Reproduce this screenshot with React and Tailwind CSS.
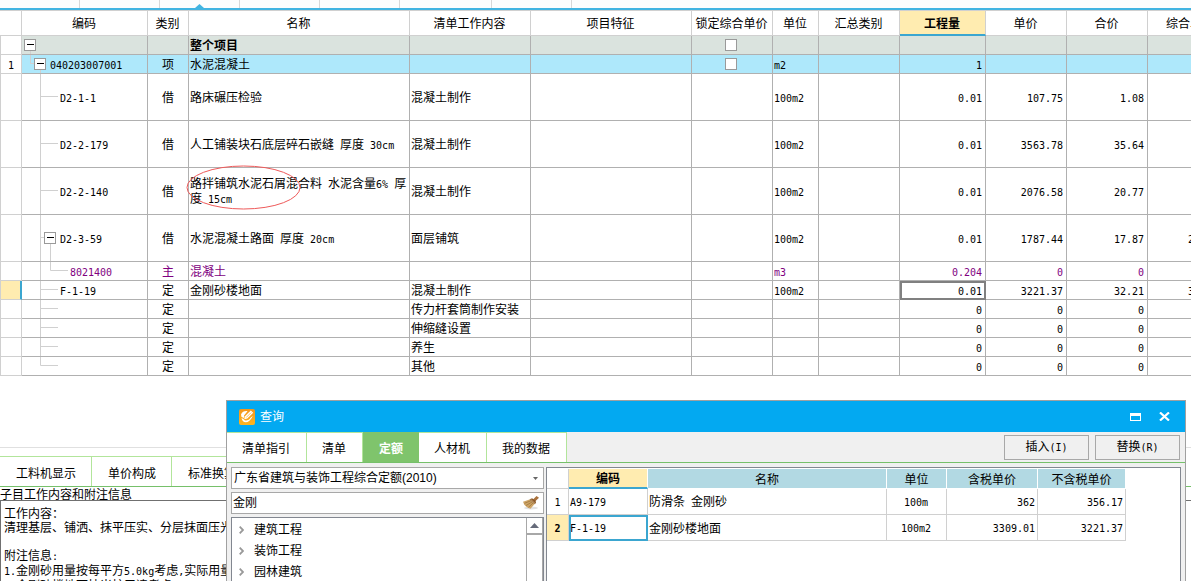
import React from "react";

const LATIN = /([\x20-\x7e]+)/;

function T({ children }) {
  return String(children)
    .split(LATIN)
    .map((part, i) =>
      i % 2 ? (
        <span key={i} className="whitespace-pre-wrap text-[10px]">{part}</span>
      ) : (
        part
      )
    );
}

const COLUMNS = ["编码", "类别", "名称", "清单工作内容", "项目特征", "锁定综合单价", "单位", "汇总类别", "工程量", "单价", "合价", "综合单价"];

const ROWS = [
  { code: "", kind: "", name: "整个项目", tone: "total", lock: true, tree: "root" },
  { n: "1", code: "040203007001", kind: "项", name: "水泥混凝土", tone: "item", unit: "m2", qty: "1", lock: true, tree: "item" },
  { code: "D2-1-1", kind: "借", name: "路床碾压检验", work: "混凝土制作", unit: "100m2", qty: "0.01", price: "107.75", sum: "1.08", tall: true, tree: "leaf" },
  { code: "D2-2-179", kind: "借", name: "人工铺装块石底层碎石嵌缝 厚度 30cm", work: "混凝土制作", unit: "100m2", qty: "0.01", price: "3563.78", sum: "35.64", tall: true, tree: "leaf" },
  { code: "D2-2-140", kind: "借", name: "路拌铺筑水泥石屑混合料 水泥含量6% 厚度 15cm", work: "混凝土制作", unit: "100m2", qty: "0.01", price: "2076.58", sum: "20.77", tall: true, tree: "leaf", marked: true },
  { code: "D2-3-59", kind: "借", name: "水泥混凝土路面 厚度 20cm", work: "面层铺筑", unit: "100m2", qty: "0.01", price: "1787.44", sum: "17.87", more: "2", tall: true, tree: "open" },
  { code: "8021400", kind: "主", name: "混凝土", unit: "m3", qty: "0.204", price: "0", sum: "0", tone: "main", tree: "child" },
  { code: "F-1-19", kind: "定", name: "金刚砂楼地面", work: "混凝土制作", unit: "100m2", qty: "0.01", price: "3221.37", sum: "32.21", more: "3", tree: "leaf", current: true },
  { kind: "定", work: "传力杆套筒制作安装", qty: "0", price: "0", sum: "0", tree: "leaf" },
  { kind: "定", work: "伸缩缝设置", qty: "0", price: "0", sum: "0", tree: "leaf" },
  { kind: "定", work: "养生", qty: "0", price: "0", sum: "0", tree: "leaf" },
  { kind: "定", work: "其他", qty: "0", price: "0", sum: "0", tree: "last" },
];

const GUTTER = { root: "w-4", item: "w-7", leaf: "w-[38px]", open: "w-[38px]", child: "w-12", last: "w-[38px]" };
const TOGGLE = { root: "left-[2px] top-[3px]", item: "left-3 top-[3px]", open: "left-[22px] top-[17px]" };

function TreeGutter({ kind, tall }) {
  const h = tall ? 46 : 18;
  const y = h / 2 - 0.5;
  const lines = {
    root: `M8.5 ${y}V${h}`,
    item: `M8.5 0V${y}H14M18.5 ${y}V${h}`,
    leaf: `M18.5 0V${h}M18.5 ${y}H36`,
    open: `M18.5 0V${h}M18.5 ${y}H24M28.5 ${y}V${h}`,
    child: `M18.5 0V${h}M28.5 0V${y}H46`,
    last: `M18.5 0V${y}H36`,
  };
  return (
    <span className={`relative block h-full shrink-0 ${GUTTER[kind]}`}>
      <svg width="48" height={h} className="block" fill="none" stroke="#d0d0d0">
        <path d={lines[kind]} />
      </svg>
      {TOGGLE[kind] && (
        <button type="button" aria-label="折叠" className={`absolute flex size-3 items-start justify-center border border-[#9a9a9a] bg-white pt-1 ${TOGGLE[kind]}`}>
          <span className="h-px w-[7px] bg-black" />
        </button>
      )}
    </span>
  );
}

const TONES = { total: "bg-[#dae3de] font-bold", item: "bg-[#aee8fb]", main: "text-[#800080]" };

function BudgetRow({ row }) {
  const line = "border-r border-b border-[#b0b0b0] pb-0";
  const cell = `${line} pt-[2px] pr-[2px] pl-px`;
  const num = `${line} pt-[2px] pr-[3px] pl-px text-right`;
  return (
    <tr className={`${row.tall ? "h-[47px]" : "h-[19px]"} ${TONES[row.tone] || ""}`}>
      <th
        scope="row"
        className={`border-b border-l border-[#d0d0d0] px-0 pt-[2px] pb-0 text-center font-normal ${
          row.current ? "border-r-2 border-r-[#3ba6d0] bg-[#ffecb0]" : "border-r bg-white"
        }`}
      >
        {row.n && <T>{row.n}</T>}
      </th>
      <td className="border-r border-b border-[#b0b0b0] p-0">
        <div className={`flex items-center overflow-hidden ${row.tall ? "h-[46px]" : "h-[18px]"}`}>
          <TreeGutter kind={row.tree} tall={row.tall} />
          <span className="pt-[2px]">{row.code && <T>{row.code}</T>}</span>
        </div>
      </td>
      <td className={`${line} px-0 pt-[2px] text-center`}>{row.kind}</td>
      <td className={`${cell} relative`}>
        <T>{row.name || ""}</T>
        {row.marked && (
          <svg className="absolute -top-1 -left-1 z-10" width="118" height="48" fill="none" stroke="#ee5a5a">
            <ellipse cx="58.500" cy="23.500" rx="56.500" ry="21.500" />
          </svg>
        )}
      </td>
      <td className={cell}>{row.work}</td>
      <td className={cell} />
      <td className={`${line} pt-0 pr-[2px] pl-0`}>
        {row.lock && (
          <input type="checkbox" aria-label={`锁定综合单价 ${row.name}`} className="mx-auto block size-3 appearance-none border border-[#9a9a9a] bg-white" />
        )}
      </td>
      <td className={cell}><T>{row.unit || ""}</T></td>
      <td className={cell} />
      <td className={`${num} ${row.current ? "outline-2 -outline-offset-2 outline-[#808080]" : ""}`}><T>{row.qty || ""}</T></td>
      <td className={num}><T>{row.price || ""}</T></td>
      <td className={num}><T>{row.sum || ""}</T></td>
      <td className={`${line} pt-[2px] pl-10`}><T>{row.more || ""}</T></td>
    </tr>
  );
}

function BudgetTable() {
  return (
    <div className="overflow-hidden">
      <table className="w-[1234px] table-fixed border-separate border-spacing-0">
        <colgroup>
          <col className="w-[22px]" />
          <col className="w-[126px]" />
          <col className="w-[41px]" />
          <col className="w-[221px]" />
          <col className="w-[121px]" />
          <col className="w-[161px]" />
          <col className="w-[81px]" />
          <col className="w-[46px]" />
          <col className="w-[81px]" />
          <col className="w-[86px]" />
          <col className="w-[81px]" />
          <col className="w-[81px]" />
          <col className="w-[86px]" />
        </colgroup>
        <thead>
          <tr className="h-[26px]">
            <td className="border-t border-r border-b border-[#d0d0d0] p-0" />
            {COLUMNS.map((c) => (
              <th
                key={c}
                scope="col"
                className={`border-t border-r border-[#d0d0d0] pt-[2px] pr-px pb-0 pl-0 ${
                  c === "工程量" ? "border-b-2 border-b-[#3ba6d0] bg-[#ffecb0] font-bold" : "border-b font-normal"
                }`}
              >
                {c}
              </th>
            ))}
          </tr>
        </thead>
        <tbody>
          {ROWS.map((row, i) => (
            <BudgetRow key={i} row={row} />
          ))}
        </tbody>
      </table>
    </div>
  );
}

function TopStrip() {
  return (
    <div className="relative flex h-[10px] border-b-2 border-[#42b4e1] bg-[#fdfdfd]">
      {[1, 2, 3, 4, 5].map((i) => (
        <div key={i} className="w-20 border-r border-[#d8d8d8]" />
      ))}
      <div className="w-[92px] border-r border-[#d8d8d8]" />
      <div className="w-20 border-r border-[#d8d8d8]" />
      <svg className="absolute bottom-0 left-[195px]" width="9" height="4" fill="#42b4e1">
        <path d="M0 4 4.500 0 9 4z" />
      </svg>
    </div>
  );
}

function DetailPane() {
  return (
    <section className="absolute inset-x-0 top-[447px] bottom-0 flex flex-col border-t border-[#e0e0e0] pt-2">
      <div className="flex h-[31px] border-b border-[#76c06a]">
        {["工料机显示", "单价构成", "标准换算"].map((t) => (
          <button key={t} type="button" className="border-t border-r border-[#b2e59b] pt-1 pr-[15px] pl-4">
            {t}
          </button>
        ))}
      </div>
      <h2 className="h-[13px] leading-[16px]">子目工作内容和附注信息</h2>
      <div className="flex-1 overflow-hidden border-t border-l border-[#707070] px-[3px] pt-[6px] whitespace-nowrap">
        <p>工作内容：</p>
        <p>清理基层、铺洒、抹平压实、分层抹面压光</p>
        <p className="mt-[14px]"><T>附注信息:</T></p>
        <p><T>1.金刚砂用量按每平方5.0kg考虑,实际用量</T></p>
        <p><T>2.金刚砂楼地面技米护三遍考虑</T></p>
      </div>
    </section>
  );
}

function AppIcon() {
  return (
    <svg width="16" height="16" viewBox="0 0 16 16" aria-hidden="true">
      <defs>
        <linearGradient id="badge" x1="0" y1="0" x2="0" y2="1">
          <stop offset="0" stopColor="#f3961c" />
          <stop offset="1" stopColor="#ffb51f" />
        </linearGradient>
      </defs>
      <rect width="16" height="16" rx="2" fill="url(#badge)" />
      <path d="M2 5.500C3 3 5.500 1.800 8.500 2.200L5 6.500 5.200 9 2.500 8z" fill="#fff" />
      <path d="M11.800 1.500 14.200 3.700 8.300 9.600 5.200 10.200 6 7.200z" fill="#fff" />
      <path d="M2.500 9C3.500 14.800 10 15.500 13.800 7L12 8.300C9.500 12 6 12.500 4.500 10z" fill="#fff" />
      <path d="m7.200 8.500 5-5" stroke="#f8a51d" strokeWidth=".7" />
    </svg>
  );
}

function Broom() {
  return (
    <svg width="18" height="16" viewBox="0 0 18 16" aria-hidden="true">
      <ellipse cx="9" cy="13" rx="7" ry="1.500" fill="#e2e2e2" />
      <path d="M14.500 1 17 2.800 13 6.500 11 4.500z" fill="#a9713c" />
      <path d="M7.500 4.500 1 6.800 2.200 9.500 3.500 11 5.500 12.500 8.500 13.800 12.500 9z" fill="#cfa566" />
      <path d="M7.500 4.500 12.500 9.300 14 8 13.500 5.500 10 3.200z" fill="#8c5a2c" />
      <path d="m2.500 8.300 6.500-2.600M4 10.500l6-3.500M6.500 12.300l4.500-4.300" stroke="#96703a" strokeWidth=".7" />
      <path d="m8.500 4.200 4.700 4.500" stroke="#e6c48c" strokeWidth=".7" />
    </svg>
  );
}

function QueryTable() {
  const head = "border-r border-b border-white bg-[#b2d9e3] px-0 pt-[2px] pb-0 font-normal";
  const line = "border-r border-b border-[#d0d0d0] pb-0 pt-[2px]";
  const cell = `${line} pr-[2px] pl-px`;
  const rows = [
    ["1", "A9-179", "防滑条 金刚砂", "100m", "362", "356.17"],
    ["2", "F-1-19", "金刚砂楼地面", "100m2", "3309.01", "3221.37"],
  ];
  return (
    <table className="w-[579px] table-fixed border-separate border-spacing-0">
      <colgroup>
        <col className="w-[22px]" />
        <col className="w-[79px]" />
        <col className="w-[239px]" />
        <col className="w-[60px]" />
        <col className="w-[91px]" />
        <col className="w-[88px]" />
      </colgroup>
      <thead>
        <tr className="h-5">
          <td className="border-r border-b border-[#d0d0d0] p-0" />
          <th scope="col" className="border-r border-b-2 border-r-white border-b-[#3ba6d0] bg-[#ffecb0] px-0 pt-[2px] pb-0 font-bold">编码</th>
          <th scope="col" className={head}>名称</th>
          <th scope="col" className={head}>单位</th>
          <th scope="col" className={head}>含税单价</th>
          <th scope="col" className={head}>不含税单价</th>
        </tr>
      </thead>
      <tbody>
        {rows.map(([n, code, name, unit, taxed, net]) => {
          const on = n === "2";
          return (
            <tr key={n} className="h-[26px]">
              <th scope="row" className={`${line} px-0 ${on ? "bg-[#ffecb0] font-bold" : "font-normal"}`}><T>{n}</T></th>
              <td className={`${cell} ${on ? "outline-2 -outline-offset-2 outline-[#3ba6d0]" : ""}`}><T>{code}</T></td>
              <td className={cell}><T>{name}</T></td>
              <td className={`${cell} text-center`}><T>{unit}</T></td>
              <td className={`${cell} text-right`}><T>{taxed}</T></td>
              <td className={`${cell} text-right`}><T>{net}</T></td>
            </tr>
          );
        })}
      </tbody>
    </table>
  );
}

function QueryDialog() {
  const tabs = ["清单指引", "清单", "定额", "人材机", "我的数据"];
  return (
    <div role="dialog" aria-label="查询" className="absolute top-[400px] right-[5px] bottom-0 left-[226px] z-20 flex flex-col border-x border-t border-[#a0a0a0] bg-[#f0f0f0]">
      <header className="flex h-[31px] shrink-0 items-center bg-[#03a9f1] pr-[15px] pl-3 text-white">
        <AppIcon />
        <h1 className="ml-[5px] flex-1">查询</h1>
        <button type="button" aria-label="最大化" className="mr-[18px]">
          <svg width="11" height="8" className="block">
            <path d="M0 0h11v8H0zM1 3v4h9V3z" fill="#fff" fillRule="evenodd" />
          </svg>
        </button>
        <button type="button" aria-label="关闭">
          <svg width="11" height="9" className="block" stroke="#fff" strokeWidth="2.200">
            <path d="M1 .5 10 8.500M10 .5 1 8.500" />
          </svg>
        </button>
      </header>
      <div className="flex h-[31px] shrink-0 items-center border-b border-[#76c06a] pr-[5px]">
        <nav className="flex h-full flex-1">
          {tabs.map((t) => (
            <button
              key={t}
              type="button"
              className={
                t === "定额"
                  ? "border-t border-[#7fc46c] bg-[#7fc46c] px-4 pt-[2px] font-bold text-white"
                  : "border-t border-r border-[#b2e59b] bg-white pt-[2px] pr-4 pl-[15px]"
              }
            >
              {t}
            </button>
          ))}
        </nav>
        <button type="button" className="mr-[6px] h-[25px] w-[85px] border border-[#a8a8a8]"><T>插入(I)</T></button>
        <button type="button" className="h-[25px] w-[85px] border border-[#a8a8a8]"><T>替换(R)</T></button>
      </div>
      <div className="flex min-h-0 flex-1 gap-[2px] pt-1 pr-1 pl-1">
        <div className="flex w-[313px] shrink-0 flex-col gap-[3px]">
          <div className="relative flex h-[22px] border border-[#a8a8a8] bg-white">
            <select aria-label="定额库" className="w-full appearance-none bg-transparent pl-[2px] font-['Liberation_Sans','Noto_Sans_CJK_SC',sans-serif]">
              <option>广东省建筑与装饰工程综合定额(2010)</option>
            </select>
            <svg width="5" height="3" fill="#666" className="pointer-events-none absolute top-[9px] right-[5px]"><path d="M0 0h5L2.500 3z" /></svg>
          </div>
          <div className="flex h-[22px] items-center border border-[#a8a8a8] bg-white pr-[3px] pl-px">
            <input type="text" aria-label="搜索" defaultValue="金刚" className="min-w-0 flex-1 bg-transparent" />
            <button type="button" aria-label="清除"><Broom /></button>
          </div>
          <div className="flex min-h-0 flex-1 overflow-hidden border-x border-t border-[#828790] bg-white">
            <ul className="flex-1 pt-px">
              {["建筑工程", "装饰工程", "园林建筑"].map((t) => (
                <li key={t} className="flex h-[21px] items-center pl-[7px]">
                  <svg width="5" height="8" fill="none" stroke="#999" strokeWidth="1.800"><path d="M.7.7 4 4 .7 7.300" /></svg>
                  <span className="ml-[10px]">{t}</span>
                </li>
              ))}
            </ul>
            <div className="w-[17px] border-x border-[#a8a8a8]">
              <button type="button" aria-label="向上滚动" className="flex h-[17px] w-full items-center justify-center border-b-2 border-[#a8a8a8] bg-white">
                <svg width="9" height="5" fill="#666b7a"><path d="M0 5 4.500 0 9 5z" /></svg>
              </button>
            </div>
          </div>
        </div>
        <div className="min-w-0 flex-1 overflow-hidden border-x border-t border-[#828790] bg-white pt-px">
          <QueryTable />
        </div>
      </div>
    </div>
  );
}

export default function App() {
  return (
    <main className="relative h-screen overflow-hidden bg-white font-['DejaVu_Sans_Mono','Noto_Sans_CJK_SC',monospace] text-[12px] leading-[14px] text-black">
      <TopStrip />
      <BudgetTable />
      <DetailPane />
      <QueryDialog />
    </main>
  );
}
